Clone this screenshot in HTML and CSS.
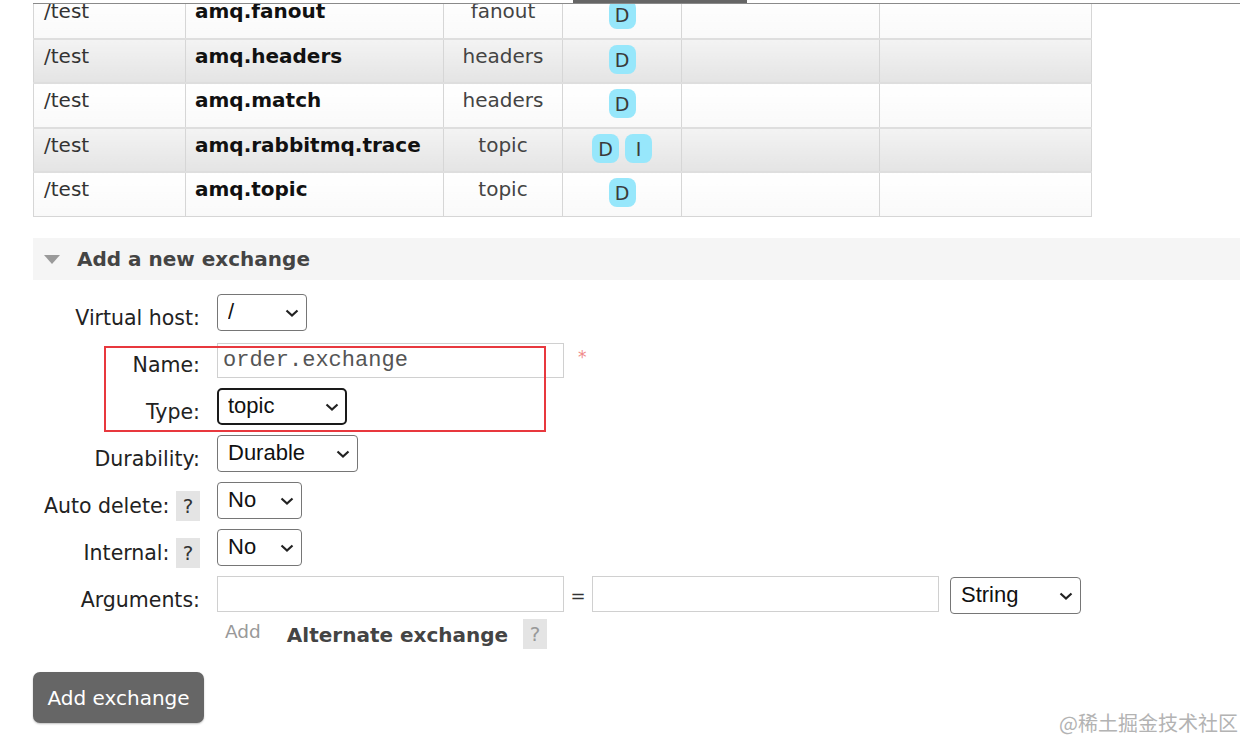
FILE: index.html
```html
<!DOCTYPE html>
<html lang="en">
    <head>
        <title>Exchanges</title>
        <meta charset="UTF-8">
        <meta name="viewport" content="width=device-width, initial-scale=1">
        <link rel="stylesheet" href="styles.css">
    </head>

    <body>
        <div class="topbar"><div class="topbar-tab"></div></div>

        <div class="page">
            <table class="list">
                <colgroup>
                    <col style="width: 152px">
                    <col style="width: 258px">
                    <col style="width: 119px">
                    <col style="width: 119px">
                    <col style="width: 198px">
                    <col style="width: 212px">
                </colgroup>
                <tbody>
                    <tr class="alt1">
                        <td>/test</td><td class="name">amq.fanout</td><td class="c">fanout</td>
                        <td class="c"><span class="badge">D</span></td><td></td><td></td>
                    </tr>
                    <tr class="alt2">
                        <td>/test</td><td class="name">amq.headers</td><td class="c">headers</td>
                        <td class="c"><span class="badge">D</span></td><td></td><td></td>
                    </tr>
                    <tr class="alt1">
                        <td>/test</td><td class="name">amq.match</td><td class="c">headers</td>
                        <td class="c"><span class="badge">D</span></td><td></td><td></td>
                    </tr>
                    <tr class="alt2">
                        <td>/test</td><td class="name">amq.rabbitmq.trace</td><td class="c">topic</td>
                        <td class="c"><span class="badge">D</span><span class="badge">I</span></td><td></td><td></td>
                    </tr>
                    <tr class="alt1">
                        <td>/test</td><td class="name">amq.topic</td><td class="c">topic</td>
                        <td class="c"><span class="badge">D</span></td><td></td><td></td>
                    </tr>
                </tbody>
            </table>

            <div class="section-head">
                <span class="arrow"></span>
                <h2>Add a new exchange</h2>
            </div>

            <form class="add-form">
                <div class="row">
                    <label class="lbl">Virtual host:</label>
                    <span class="sel-wrap">
                        <select class="sel sel-vhost"><option>/</option></select>
                        <svg class="chev" viewBox="0 0 14 8"><path d="M1.5 1.5 L7 6.5 L12.5 1.5"/></svg>
                    </span>
                </div>
                <div class="row">
                    <label class="lbl">Name:</label>
                    <input class="txt txt-name" type="text" value="order.exchange">
                    <span class="req">*</span>
                </div>
                <div class="row">
                    <label class="lbl">Type:</label>
                    <span class="sel-wrap">
                        <select class="sel sel-type"><option>topic</option></select>
                        <svg class="chev" viewBox="0 0 14 8"><path d="M1.5 1.5 L7 6.5 L12.5 1.5"/></svg>
                    </span>
                </div>
                <div class="row">
                    <label class="lbl">Durability:</label>
                    <span class="sel-wrap">
                        <select class="sel sel-durable"><option>Durable</option></select>
                        <svg class="chev" viewBox="0 0 14 8"><path d="M1.5 1.5 L7 6.5 L12.5 1.5"/></svg>
                    </span>
                </div>
                <div class="row">
                    <label class="lbl">Auto delete: <span class="help">?</span></label>
                    <span class="sel-wrap">
                        <select class="sel sel-no"><option>No</option></select>
                        <svg class="chev" viewBox="0 0 14 8"><path d="M1.5 1.5 L7 6.5 L12.5 1.5"/></svg>
                    </span>
                </div>
                <div class="row">
                    <label class="lbl">Internal: <span class="help">?</span></label>
                    <span class="sel-wrap">
                        <select class="sel sel-no"><option>No</option></select>
                        <svg class="chev" viewBox="0 0 14 8"><path d="M1.5 1.5 L7 6.5 L12.5 1.5"/></svg>
                    </span>
                </div>
                <div class="row row-args">
                    <label class="lbl">Arguments:</label>
                    <div class="args">
                        <div class="args-line">
                            <input class="txt txt-arg" type="text">
                            <span class="eq">=</span>
                            <input class="txt txt-arg" type="text">
                            <span class="sel-wrap sel-wrap-string">
                                <select class="sel sel-string"><option>String</option></select>
                                <svg class="chev" viewBox="0 0 14 8"><path d="M1.5 1.5 L7 6.5 L12.5 1.5"/></svg>
                            </span>
                        </div>
                        <div class="args-add">
                            <span class="add-link">Add</span>
                            <span class="alt-ex">Alternate exchange</span>
                            <span class="help">?</span>
                        </div>
                    </div>
                </div>

                <button type="button" class="btn">Add exchange</button>
            </form>
        </div>

        <!-- annotation box drawn over the screenshot -->
        <div class="mark"></div>
        <div class="watermark">@稀土掘金技术社区</div>
    </body>
</html>
```

FILE: styles.css
```css
body {
    margin: 0;
    font-family: "DejaVu Sans", Verdana, sans-serif;
    color: #222;
    background-color: #fff;
    position: relative;
    height: 740px;
    overflow: hidden;
}
.topbar {
    position: absolute;
    top: 0;
    left: 33px;
    right: 0;
    height: 3px;
    border-bottom: 1px solid #8a8a8a;
    background-color: #fff;
    z-index: 2;
}
.topbar-tab {
    position: absolute;
    left: 540px;
    top: 0;
    width: 174px;
    height: 3px;
    background-color: #666;
}
.page {
    padding-left: 33px;
    margin-top: -7px;
}

/* exchanges table */
.list {
    width: 1058px;
    border-collapse: collapse;
    table-layout: fixed;
    font-size: 20px;
}
.list td {
    height: 44.5px;
    padding: 4px 10px 0 10px;
    vertical-align: top;
    border: 1px solid #d6d6d6;
    border-top: 2px solid #dedede;
    box-sizing: border-box;
    white-space: nowrap;
    color: #333;
}
.list tr.alt1 td {
    background: linear-gradient(180deg, #ffffff, #f9f9f9);
}
.list tr.alt2 td {
    background: linear-gradient(180deg, #f3f3f3, #e4e4e4);
}
.list td.name {
    font-weight: bold;
    color: #111;
    padding-left: 9px;
}
.list td.c {
    text-align: center;
    color: #444;
}
.badge {
    display: inline-block;
    width: 27px;
    height: 29px;
    line-height: 30px;
    margin: 1px 3px 0 3px;
    border-radius: 8px;
    background-color: #97e7fb;
    color: #3a3a3a;
    font-size: 19px;
    text-align: center;
}

/* section heading */
.section-head {
    display: flex;
    align-items: center;
    height: 42px;
    margin-top: 21px;
    background-color: #f5f5f5;
}
.arrow {
    width: 0;
    height: 0;
    margin-left: 11px;
    margin-right: 17px;
    border-left: 8px solid transparent;
    border-right: 8px solid transparent;
    border-top: 9px solid #9a9a9a;
}
.section-head h2 {
    margin: 0;
    font-size: 20px;
    font-weight: bold;
    color: #444;
}

/* form */
.add-form {
    padding-top: 14px;
}
.row {
    display: flex;
    align-items: flex-start;
    height: 47px;
}
.lbl {
    width: 167px;
    margin-right: 17px;
    padding-top: 9px;
    display: flex;
    justify-content: flex-end;
    align-items: flex-start;
    font-size: 20.5px;
    line-height: 31px;
    color: #222;
    white-space: pre;
}
.help {
    display: inline-block;
    width: 24px;
    height: 30px;
    background-color: #e4e4e4;
    color: #333;
    text-align: center;
    font-size: 20px;
    line-height: 31px;
}
.sel-wrap {
    position: relative;
    display: inline-block;
}
.sel {
    -webkit-appearance: none;
    appearance: none;
    box-sizing: border-box;
    height: 37px;
    font-family: "Liberation Sans", Arial, sans-serif;
    font-size: 22px;
    color: #111;
    border: 1px solid #767676;
    border-radius: 4px;
    background-color: #fff;
    padding: 0 6px 2px 10px;
    outline: none;
}
.chev {
    position: absolute;
    right: 8px;
    top: 15px;
    width: 14px;
    height: 8px;
    fill: none;
    stroke: #222;
    stroke-width: 2.2;
    pointer-events: none;
}
.sel-vhost { width: 90px; }
.sel-type {
    width: 130px;
    border: 2px solid #1a1a1a;
    border-radius: 5px;
    padding-left: 9px;
}
.sel-durable { width: 141px; }
.sel-no { width: 85px; }
.sel-wrap-string { margin-top: 1px; }
.sel-string { width: 131px; }
.txt {
    height: 35px;
    box-sizing: border-box;
    border: 1px solid #d0d0d0;
    padding: 0 5px;
    font-family: "Liberation Mono", "Courier New", monospace;
    font-size: 22px;
    color: #555;
    outline: none;
}
.txt-name {
    width: 347px;
    margin-top: 2px;
}
.req {
    margin-left: 14px;
    margin-top: 6px;
    color: #f08a8a;
    font-size: 17px;
}
.row-args {
    height: auto;
}
.args-line {
    display: flex;
    align-items: flex-start;
}
.txt-arg {
    width: 347px;
    height: 36px;
}
.eq {
    width: 28px;
    text-align: center;
    font-size: 18px;
    line-height: 40px;
    color: #333;
}
.args-line .txt-arg + .eq + .txt-arg {
    margin-right: 11px;
}
.args-add {
    display: flex;
    align-items: flex-start;
    margin-top: 3px;
    height: 46px;
}
.add-link {
    margin-left: 8px;
    margin-right: 26px;
    font-size: 18.5px;
    line-height: 26px;
    color: #999;
}
.alt-ex {
    margin-top: 3px;
    margin-right: 15px;
    font-size: 20px;
    font-weight: bold;
    line-height: 26px;
    color: #444;
}
.args-add .help {
    color: #999;
}
.btn {
    margin-top: 7px;
    width: 171px;
    height: 51px;
    background-color: #666;
    color: #fff;
    border: 0;
    border-radius: 7px;
    font-family: "DejaVu Sans", Verdana, sans-serif;
    font-size: 20px;
    box-shadow: 0 1px 2px rgba(0, 0, 0, 0.25);
}

/* overlays */
.mark {
    position: absolute;
    left: 104px;
    top: 346px;
    width: 438px;
    height: 82px;
    border: 2px solid #e8383e;
}
.watermark {
    position: absolute;
    right: 2px;
    top: 708px;
    font-family: "Noto Sans CJK SC", sans-serif;
    font-size: 20px;
    color: #b3b3b3;
}
```
